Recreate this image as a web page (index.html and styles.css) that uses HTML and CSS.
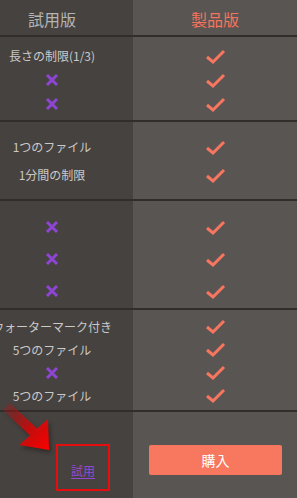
FILE: index.html
```html
<!DOCTYPE html>
<html lang="ja">
<head>
<meta charset="utf-8">
<title>製品比較</title>
<link rel="stylesheet" href="styles.css">
</head>
<body>
<div class="table">
  <div class="section head">
    <div class="cell left"><div class="row"><span class="title trial">試用版</span></div></div>
    <div class="cell right"><div class="row"><span class="title pro">製品版</span></div></div>
  </div>

  <div class="section s1">
    <div class="cell left">
      <div class="row">長さの制限(1/3)</div>
      <div class="row"><svg class="cross" viewBox="0 0 14 14"><path d="M2 2L12 12M12 2L2 12"/></svg></div>
      <div class="row"><svg class="cross" viewBox="0 0 14 14"><path d="M2 2L12 12M12 2L2 12"/></svg></div>
    </div>
    <div class="cell right">
      <div class="row"><svg class="check" viewBox="0 0 21 15"><path d="M2 8L8 13L19 2"/></svg></div>
      <div class="row"><svg class="check" viewBox="0 0 21 15"><path d="M2 8L8 13L19 2"/></svg></div>
      <div class="row"><svg class="check" viewBox="0 0 21 15"><path d="M2 8L8 13L19 2"/></svg></div>
    </div>
  </div>

  <div class="section s2">
    <div class="cell left">
      <div class="row">1つのファイル</div>
      <div class="row">1分間の制限</div>
    </div>
    <div class="cell right">
      <div class="row"><svg class="check" viewBox="0 0 21 15"><path d="M2 8L8 13L19 2"/></svg></div>
      <div class="row"><svg class="check" viewBox="0 0 21 15"><path d="M2 8L8 13L19 2"/></svg></div>
    </div>
  </div>

  <div class="section s3">
    <div class="cell left">
      <div class="row"><svg class="cross" viewBox="0 0 14 14"><path d="M2 2L12 12M12 2L2 12"/></svg></div>
      <div class="row"><svg class="cross" viewBox="0 0 14 14"><path d="M2 2L12 12M12 2L2 12"/></svg></div>
      <div class="row"><svg class="cross" viewBox="0 0 14 14"><path d="M2 2L12 12M12 2L2 12"/></svg></div>
    </div>
    <div class="cell right">
      <div class="row"><svg class="check" viewBox="0 0 21 15"><path d="M2 8L8 13L19 2"/></svg></div>
      <div class="row"><svg class="check" viewBox="0 0 21 15"><path d="M2 8L8 13L19 2"/></svg></div>
      <div class="row"><svg class="check" viewBox="0 0 21 15"><path d="M2 8L8 13L19 2"/></svg></div>
    </div>
  </div>

  <div class="section s4">
    <div class="cell left">
      <div class="row">ウォーターマーク付き</div>
      <div class="row">5つのファイル</div>
      <div class="row"><svg class="cross" viewBox="0 0 14 14"><path d="M2 2L12 12M12 2L2 12"/></svg></div>
      <div class="row">5つのファイル</div>
    </div>
    <div class="cell right">
      <div class="row"><svg class="check" viewBox="0 0 21 15"><path d="M2 8L8 13L19 2"/></svg></div>
      <div class="row"><svg class="check" viewBox="0 0 21 15"><path d="M2 8L8 13L19 2"/></svg></div>
      <div class="row"><svg class="check" viewBox="0 0 21 15"><path d="M2 8L8 13L19 2"/></svg></div>
      <div class="row"><svg class="check" viewBox="0 0 21 15"><path d="M2 8L8 13L19 2"/></svg></div>
    </div>
  </div>

  <div class="section foot">
    <div class="cell left">
      <div class="highlight"><a class="try" href="#">試用</a></div>
    </div>
    <div class="cell right">
      <a class="buy" href="#">購入</a>
    </div>
  </div>

  <svg class="pointer" viewBox="0 0 60 56" width="60" height="56">
    <defs>
      <linearGradient id="arrowFill" x1="0" y1="0" x2="1" y2="1">
        <stop offset="0" stop-color="#c21414" stop-opacity="0.15"/>
        <stop offset="0.55" stop-color="#d80808" stop-opacity="0.85"/>
        <stop offset="1" stop-color="#ff0000"/>
      </linearGradient>
    </defs>
    <polygon points="9.5,2.5 37,28.5 48,19 49,50 19,45 30,35.5 2.5,9.5" fill="url(#arrowFill)"/>
  </svg>
</div>
</body>
</html>
```

FILE: styles.css
```css
html, body {
  margin: 0;
  padding: 0;
}

body {
  width: 297px;
  height: 498px;
  overflow: hidden;
  background: #595553;
  font-family: "Noto Sans CJK JP", "Noto Sans", sans-serif;
  color: #c9c9c9;
  font-size: 12px;
}

.table {
  position: relative;
  width: 297px;
  height: 498px;
  display: flex;
  flex-direction: column;
}

.section {
  display: grid;
  grid-template-columns: 133px 164px;
  border-bottom: 2px solid #302d2b;
}

.cell {
  display: flex;
  flex-direction: column;
}

.cell.left {
  background: #46423f;
  padding-right: 29px;
  overflow: hidden;
}

.cell.right {
  background: #595553;
}

.row {
  display: flex;
  align-items: center;
  justify-content: center;
  white-space: nowrap;
  line-height: 1;
}

/* header */
.head .cell { height: 35px; justify-content: center; }
.head .row { padding-top: 3px; }
.title { font-size: 16px; }
.title.trial { color: #b4b4b4; }
.title.pro { color: #f6735d; }

/* section spacing */
.s1 .cell { padding-top: 7px; padding-bottom: 4px; }
.s1 .row { height: 24px; }

.s2 .cell { padding-top: 11px; padding-bottom: 10px; }
.s2 .row { height: 28px; }

.s3 .cell { padding-top: 10px; padding-bottom: 1px; }
.s3 .row { height: 32px; }

.s4 .cell { padding-top: 5px; padding-bottom: 3px; }
.s4 .row { height: 23px; }

.cell.left, .cell.right { box-sizing: border-box; }
.cell.right { padding-right: 0; }

/* icons */
.check {
  width: 21px;
  height: 15px;
  fill: none;
  stroke: #f7765f;
  stroke-width: 3;
  stroke-linecap: butt;
  stroke-linejoin: miter;
}

.cross {
  width: 14px;
  height: 14px;
  fill: none;
  stroke: #8d45d4;
  stroke-width: 3;
}

/* footer */
.foot {
  flex: 1;
  border-bottom: none;
}

.foot .cell.left {
  padding: 32px 0 0 56px;
}

.highlight {
  box-sizing: border-box;
  width: 54px;
  height: 47px;
  border: 2px solid #e50d0d;
  display: flex;
  align-items: center;
  justify-content: center;
  padding-top: 5px;
}

.try {
  color: #9347d6;
  font-size: 12px;
  text-decoration: underline;
  text-underline-offset: 2px;
}

.foot .cell.right {
  padding: 33px 0 0 16px;
}

.buy {
  box-sizing: border-box;
  width: 133px;
  height: 30px;
  border-radius: 2px;
  background: #f7775f;
  color: #ffffff;
  font-size: 14px;
  text-decoration: none;
  display: flex;
  align-items: center;
  justify-content: center;
}

/* annotation arrow pointing at the trial link */
.pointer {
  position: absolute;
  left: 0;
  top: 400px;
  filter: drop-shadow(2px 3px 2px rgba(0, 0, 0, 0.35));
}
```
